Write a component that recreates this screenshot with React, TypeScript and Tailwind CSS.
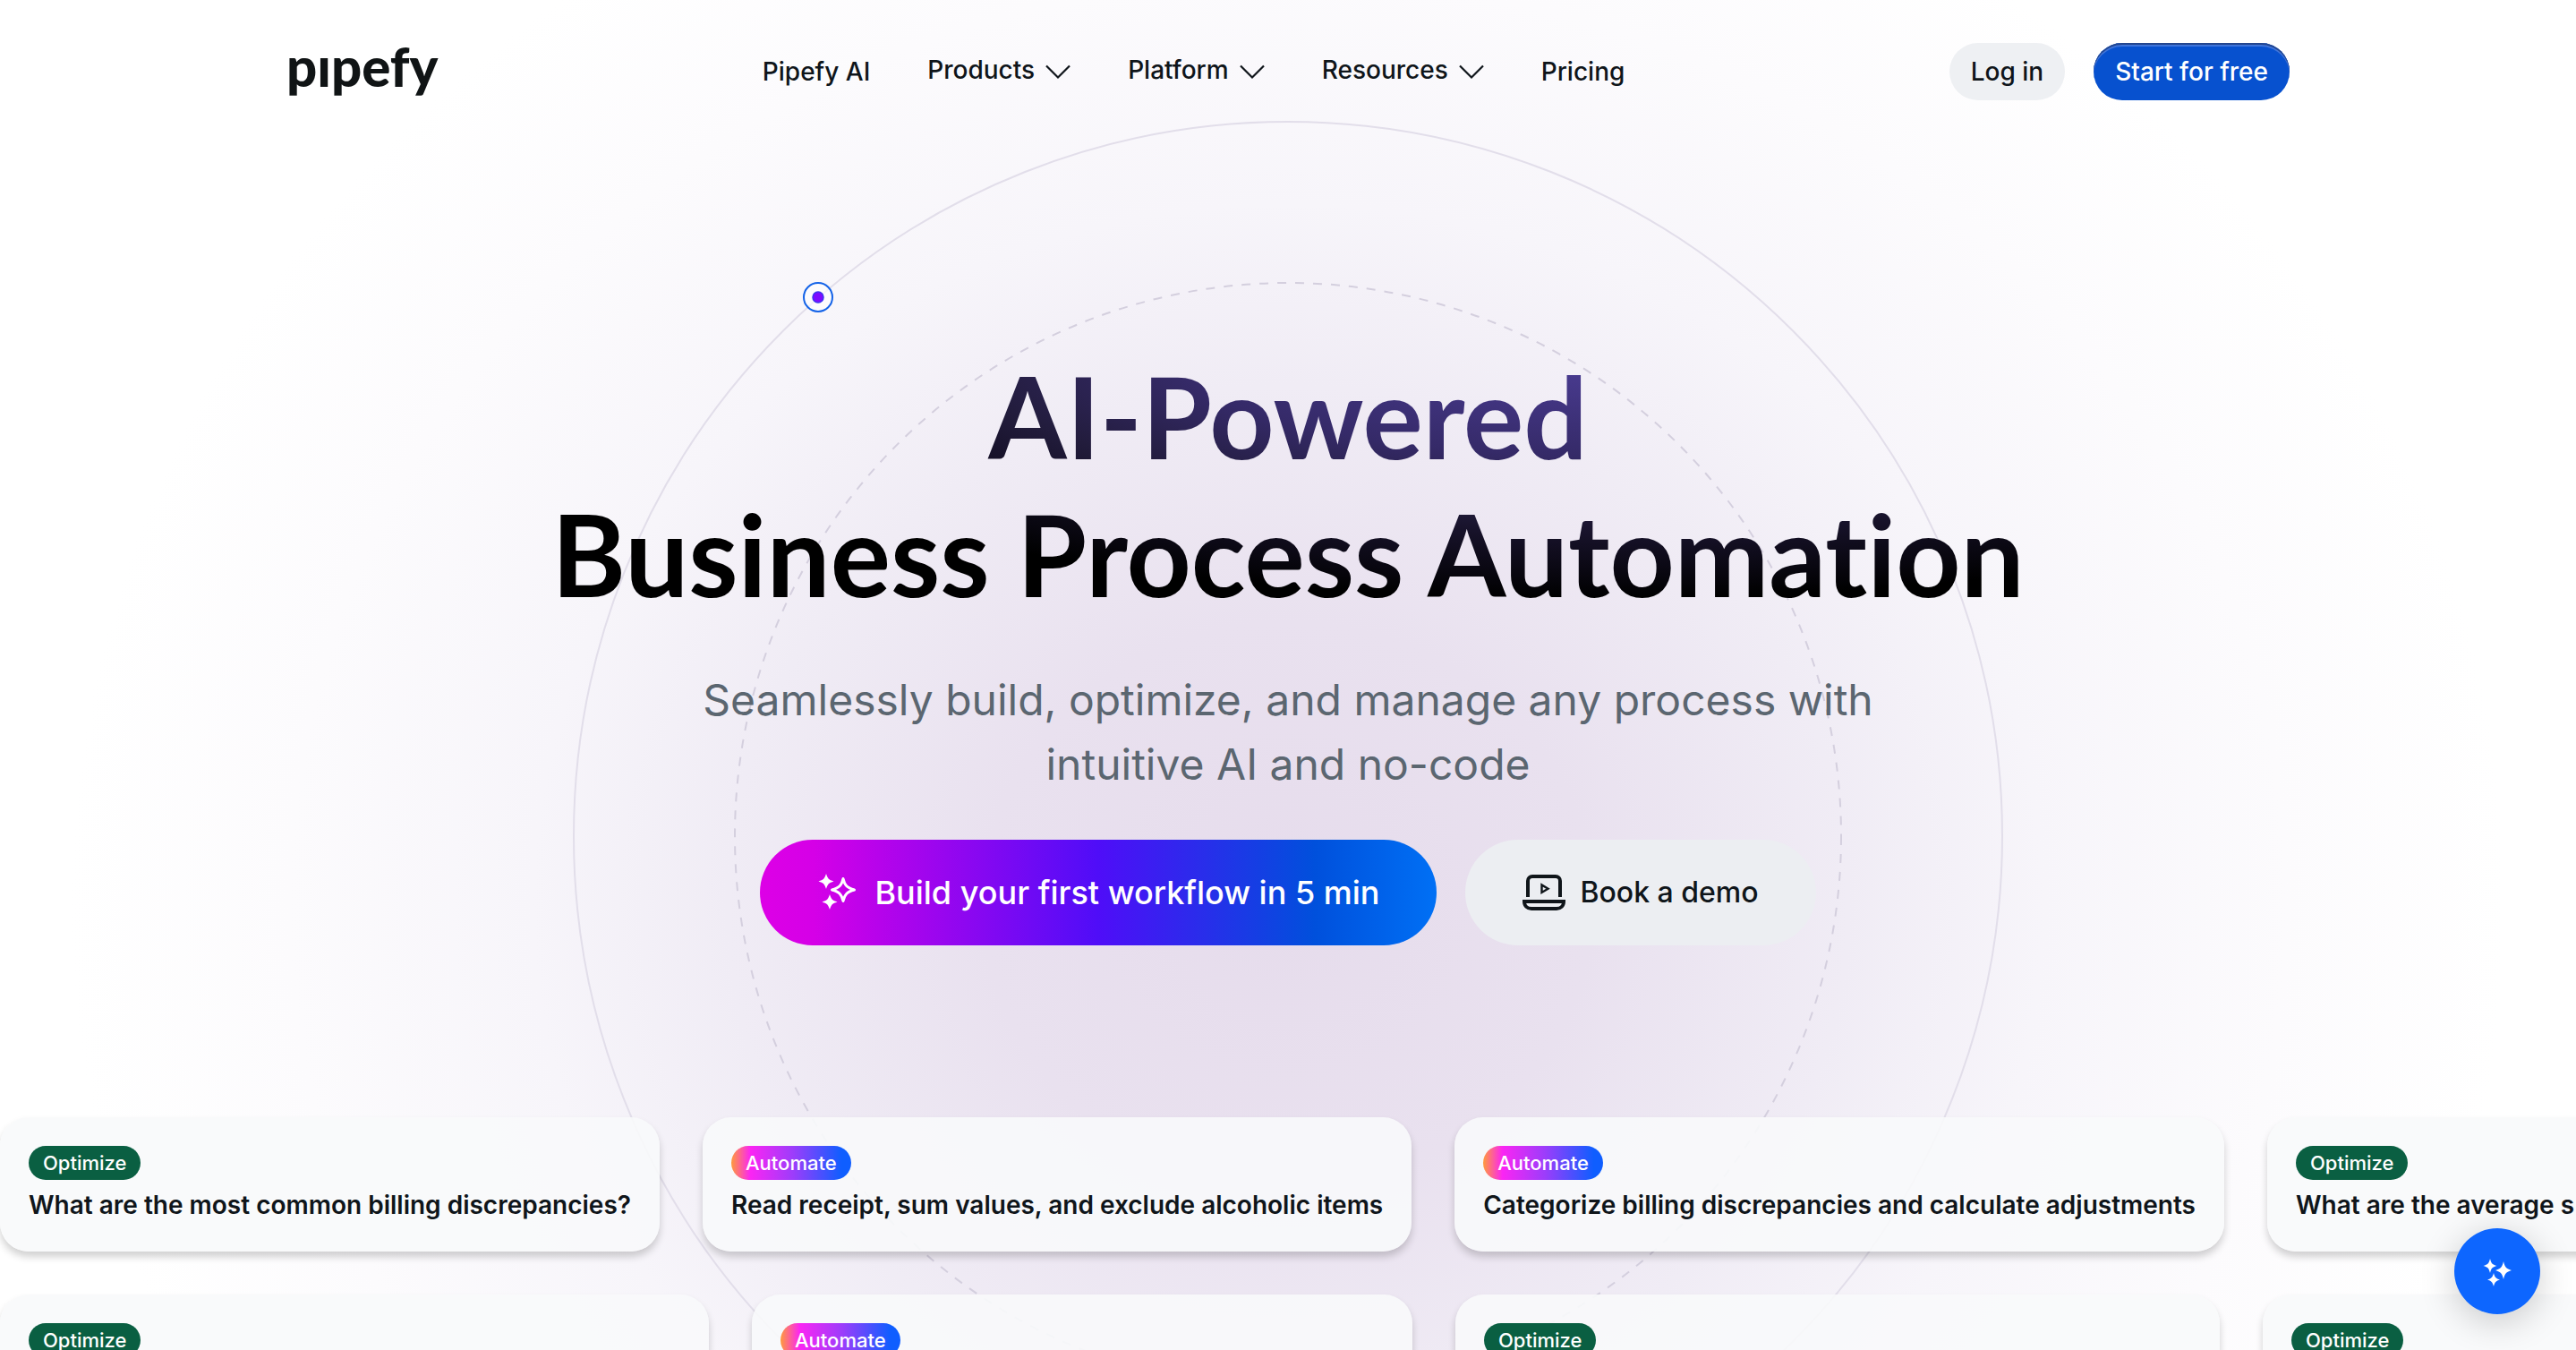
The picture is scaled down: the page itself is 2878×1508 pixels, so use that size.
import React from "react";

type Tag = "Optimize" | "Automate";
type Prompt = { tag: Tag; title?: string; width?: string };

const topRow: Prompt[] = [
  { tag: "Optimize", title: "What are the most common billing discrepancies?" },
  { tag: "Automate", title: "Read receipt, sum values, and exclude alcoholic items" },
  { tag: "Automate", title: "Categorize billing discrepancies and calculate adjustments" },
  { tag: "Optimize", title: "What are the average s", width: "w-[800px]" },
];

const bottomRow: Prompt[] = [
  { tag: "Optimize", width: "w-[792px]" },
  { tag: "Automate", width: "w-[738px]" },
  { tag: "Optimize", width: "w-[854px]" },
  { tag: "Optimize", width: "w-[800px]" },
];

function Chevron() {
  return (
    <svg viewBox="0 0 28 28" className="size-7" fill="none" stroke="currentColor" strokeWidth="2.2" aria-hidden="true">
      <path d="M1 9.5 14 22.5 27 9.5" />
    </svg>
  );
}

function NavMenu({ label }: { label: string }) {
  return (
    <button type="button" className="flex items-center gap-3 pb-1">
      {label}
      <Chevron />
    </button>
  );
}

function Sparkles() {
  return (
    <svg viewBox="0 0 44 44" className="size-11" fill="currentColor" aria-hidden="true">
      <path d="M10 1c1.6 5.4 3 6.800 8.500 8.500C13 11.200 11.600 12.600 10 18 8.400 12.600 7 11.200 1.500 9.500 7 7.800 8.400 6.400 10 1Z" />
      <path d="M14 24c1.600 5.400 3 6.800 8.500 8.500C17 34.200 15.600 35.600 14 41c-1.600-5.400-3-6.800-8.500-8.500C11 30.800 12.400 29.400 14 24Z" />
      <path
        d="M29 6.500c1.800 7.700 4.400 10.300 12.500 12.500C33.400 21.200 30.800 23.800 29 31.500 27.200 23.800 24.600 21.200 16.500 19 24.600 16.800 27.200 14.200 29 6.500Z"
        fill="none"
        stroke="currentColor"
        strokeWidth="3"
        strokeLinejoin="round"
      />
    </svg>
  );
}

function Laptop() {
  return (
    <svg viewBox="0 0 48 48" className="size-12" fill="none" stroke="currentColor" strokeWidth="4" aria-hidden="true">
      <path d="M6 29V11a5 5 0 0 1 5-5h26a5 5 0 0 1 5 5v18" />
      <path d="M2 34h44c0 5-3.500 8-8 8H10c-4.500 0-8-3-8-8Z" />
      <path d="M21.500 15.500v8.500l7-4.200Z" strokeWidth="2.400" />
    </svg>
  );
}

function ThreeStars() {
  return (
    <svg viewBox="0 0 36 36" className="size-9" fill="currentColor" aria-hidden="true">
      <path d="M10 4c1.300 5.200 2.500 6.500 7.500 8-5 1.500-6.200 2.800-7.500 8-1.300-5.200-2.500-6.500-7.500-8 5-1.500 6.200-2.800 7.500-8Z" />
      <path d="M25 7c1.500 6.500 3 8 9 10-6 2-7.500 3.500-9 10-1.500-6.500-3-8-9-10 6-2 7.500-3.500 9-10Z" />
      <path d="M14 20c1.300 5 2.500 6 7 7.500-4.500 1.500-5.700 2.500-7 7.500-1.300-5-2.500-6-7-7.500 4.500-1.500 5.700-2.500 7-7.500Z" />
    </svg>
  );
}

function Orbits() {
  return (
    <svg
      viewBox="0 0 1600 1600"
      className="pointer-events-none absolute left-1/2 top-[134px] size-[1600px] -translate-x-1/2"
      fill="none"
      aria-hidden="true"
    >
      <circle cx="800" cy="800" r="798" stroke="#e2deea" strokeWidth="2" />
      <circle cx="800" cy="800" r="618" stroke="#d4cfde" strokeWidth="2" strokeDasharray="10 10" />
      <circle cx="275" cy="198" r="16" fill="#ffffff" fillOpacity="0.6" stroke="#1463e8" strokeWidth="2" />
      <circle cx="275" cy="198" r="6" fill="#7d0aff" stroke="#3a32f0" strokeWidth="1.500" />
    </svg>
  );
}

function Card({ tag, title, width = "" }: Prompt) {
  const tone =
    tag === "Optimize"
      ? "bg-[#0a5f42]"
      : "bg-[linear-gradient(90deg,#ff9a3c_0%,#fb25f3_16%,#9b3dfb_52%,#0f5eff_92%)]";
  return (
    <li
      className={`flex h-[150px] shrink-0 flex-col items-start gap-2 rounded-[32px] bg-[#f8fafb]/90 p-8 shadow-[0_6px_8px_rgba(0,0,0,0.18)] ${width}`}
    >
      <span className={`rounded-full px-4 text-[22px] leading-[38px] font-medium text-white ${tone}`}>{tag}</span>
      {title && <p className="text-[28px] leading-10 font-semibold whitespace-nowrap">{title}</p>}
    </li>
  );
}

function CardRow({ items }: { items: Prompt[] }) {
  return (
    <ul className="flex gap-12">
      {items.map((item, i) => (
        <Card key={i} {...item} />
      ))}
    </ul>
  );
}

export default function App() {
  return (
    <div className="relative h-screen overflow-hidden bg-white bg-[radial-gradient(1360px_1260px_at_50%_1010px,#e6dcec_0%,#e9e1ef_25%,#f0ecf5_46%,#f7f5fa_62%,#fcfbfd_82%,#ffffff_100%)] font-['Inter',sans-serif] text-[#0f151a]">
      <Orbits />
      <div className="relative">
        <header className="flex items-center justify-between px-80 pt-12 text-[28px] leading-10 font-[450]">
          <a
            href="#"
            aria-label="pipefy"
            className="self-start font-['Lato',sans-serif] text-[60px] leading-[52px] font-black text-[#101415]"
          >
            pıpefy
          </a>
          <nav className="flex items-center gap-16">
            <a href="#">Pipefy AI</a>
            <NavMenu label="Products" />
            <NavMenu label="Platform" />
            <NavMenu label="Resources" />
            <a href="#">Pricing</a>
          </nav>
          <div className="flex items-center gap-8">
            <a href="#" className="rounded-full bg-[#eef0f3] px-6 py-3">
              Log in
            </a>
            <a
              href="#"
              className="rounded-full bg-[#0751cf] px-6 py-3 text-white shadow-[inset_0_2px_0_#23468f,inset_0_4px_0_#3f74da]"
            >
              Start for free
            </a>
          </div>
        </header>

        <main>
          <section className="flex flex-col items-center pt-[276px] text-center">
            <h1 className="bg-[radial-gradient(68%_91%_at_71%_0%,#4e3f9a_0%,#352a68_43%,#221c3c_64%,#17122a_74%,#000000_100%)] bg-clip-text font-['Lato',sans-serif] text-[126px] leading-[154px] font-bold text-transparent [font-variant-ligatures:none]">
              AI-Powered
              <br />
              Business Process Automation
            </h1>
            <p className="mt-[50px] max-w-[1400px] text-[48px] leading-[72px] text-[#5b6670]">
              Seamlessly build, optimize, and manage any process with intuitive AI and no-code
            </p>
            <div className="mt-12 flex gap-8">
              <a
                href="#"
                className="flex h-[118px] items-center gap-5 rounded-full bg-[linear-gradient(90deg,#dd00e6_0%,#d500e7_8%,#4f0df8_50%,#0050dc_82%,#0070f5_100%)] px-16 text-[36px] font-[450] text-white"
              >
                <Sparkles />
                Build your first workflow in 5 min
              </a>
              <a href="#" className="flex h-[118px] items-center gap-4 rounded-full bg-[#eceef2] px-16 text-[32px] font-[450]">
                <Laptop />
                Book a demo
              </a>
            </div>
          </section>

          <section className="mt-48 flex flex-col gap-12">
            <CardRow items={topRow} />
            <CardRow items={bottomRow} />
          </section>
        </main>
      </div>
      <button
        type="button"
        aria-label="Open assistant"
        className="fixed right-10 bottom-10 flex size-24 items-center justify-center rounded-full bg-[#0d66ff] text-white shadow-[0_8px_40px_rgba(0,0,0,0.2)]"
      >
        <ThreeStars />
      </button>
    </div>
  );
}
